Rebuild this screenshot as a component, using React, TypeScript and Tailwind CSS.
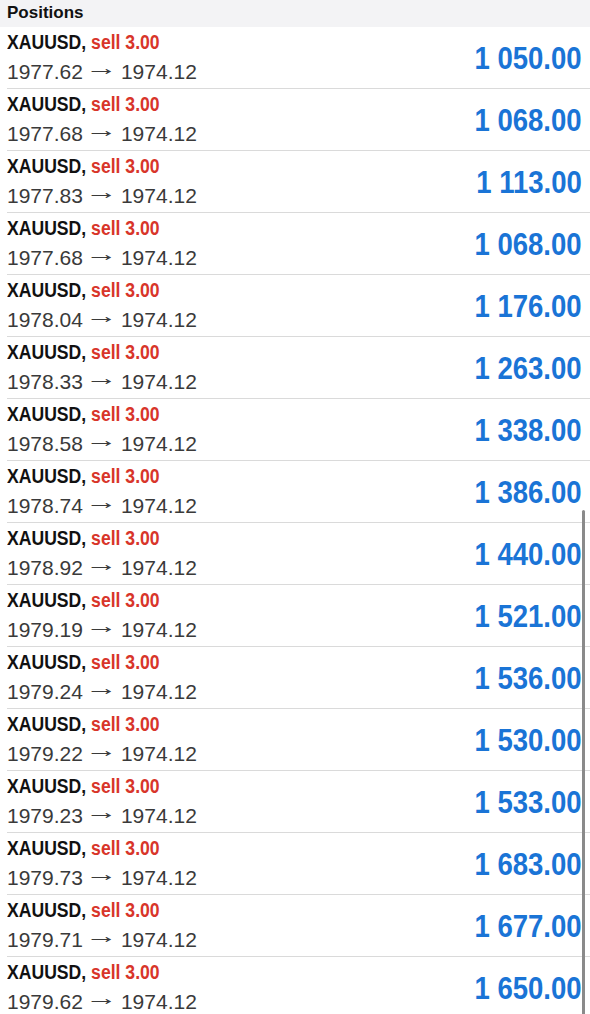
import React from "react";

const rows: [string, string][] = [
  ["1977.62", "1 050.00"],
  ["1977.68", "1 068.00"],
  ["1977.83", "1 113.00"],
  ["1977.68", "1 068.00"],
  ["1978.04", "1 176.00"],
  ["1978.33", "1 263.00"],
  ["1978.58", "1 338.00"],
  ["1978.74", "1 386.00"],
  ["1978.92", "1 440.00"],
  ["1979.19", "1 521.00"],
  ["1979.24", "1 536.00"],
  ["1979.22", "1 530.00"],
  ["1979.23", "1 533.00"],
  ["1979.73", "1 683.00"],
  ["1979.71", "1 677.00"],
  ["1979.62", "1 650.00"],
];

export default function App() {
  return (
    <div
      className="relative w-[590px] h-[1014px] overflow-hidden bg-white"
      style={{ fontFamily: '"Liberation Sans", Arial, sans-serif' }}
    >
      <div className="h-[27px] bg-[#f3f3f5] px-[7px] flex items-center">
        <span className="text-[17px] font-bold text-[#111] leading-none pb-[2px]">Positions</span>
      </div>
      {rows.map(([open, profit], i) => (
        <div
          key={i}
          className="h-[62px] ml-[7px] pr-[8px] flex items-center justify-between border-b border-[#dadada]"
        >
          <div className="flex flex-col h-full">
            <div className="h-[30px] leading-[30px] whitespace-nowrap">
              <span className="inline-block origin-left scale-x-[0.88] text-[20px] font-bold">
                <span className="text-[#111]">XAUUSD,</span>{" "}
                <span className="text-[#d8352a]">sell 3.00</span>
              </span>
            </div>
            <div className="h-[30px] leading-[30px] whitespace-nowrap text-[21px] text-[#3a3a3a] flex items-center">
              <span>{open}</span>
              <span className="inline-block w-[38px] text-center">
                <span className="inline-block scale-x-[1.55] -translate-y-[4px]">→</span>
              </span>
              <span>1974.12</span>
            </div>
          </div>
          <span className="inline-block origin-right scale-x-[0.86] text-[32px] leading-[34px] font-bold text-[#1a74d6] whitespace-nowrap">
            {profit}
          </span>
        </div>
      ))}
      <div className="absolute right-[5px] top-[510px] w-[3px] h-[520px] rounded-full bg-[#8a8a8a]" />
    </div>
  );
}
